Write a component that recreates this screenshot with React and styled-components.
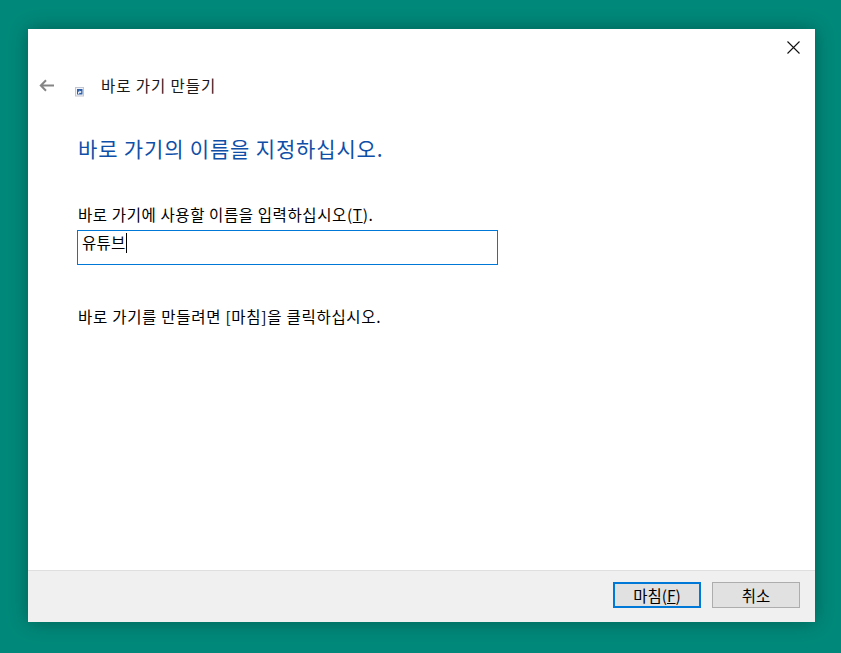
import React from "react";
import styled, { createGlobalStyle } from "styled-components";

const Global = createGlobalStyle`
  html, body { margin: 0; padding: 0; height: 100%; }
  body { background: #00897a; overflow: hidden; }
  #root { height: 100%; }
`;

const Desktop = styled.div`
  width: 841px;
  height: 653px;
  box-sizing: border-box;
  padding: 29px 26px 31px 28px;
  background: #00897a;
  font-family: "Noto Sans CJK KR", "Liberation Sans", sans-serif;
`;

const Dialog = styled.div`
  width: 787px;
  height: 593px;
  background: #fff;
  display: flex;
  flex-direction: column;
  box-shadow: 0 0 18px rgba(0, 40, 35, 0.42);
`;

const TopBar = styled.div`
  height: 28px;
  display: flex;
  justify-content: flex-end;
`;

const CloseButton = styled.div`
  width: 44px;
  height: 37px;
  display: flex;
  align-items: center;
  justify-content: center;
`;

const Nav = styled.div`
  height: 22px;
  margin-top: 18px;
  padding-left: 11px;
  display: flex;
  align-items: center;
`;

const Title = styled.span`
  margin-left: 16px;
  font-size: 15.5px;
  line-height: 22px;
  color: #1a1a1a;
  letter-spacing: 0.93px;
  position: relative;
  top: -1px;
`;

const Body = styled.div`
  flex: 1;
  padding: 37px 0 0 50px;
  display: flex;
  flex-direction: column;
`;

const Heading = styled.h1`
  margin: 0;
  font-size: 21px;
  line-height: 28px;
  font-weight: 400;
  color: #0f4fa8;
  letter-spacing: 0.83px;
`;

const Label = styled.div`
  margin-top: 42px;
  font-size: 15.5px;
  line-height: 20px;
  color: #000;
  letter-spacing: 0.6px;
`;

const Hot = styled.span`
  text-decoration: underline;
  text-underline-offset: 1px;
`;

const NameField = styled.div`
  margin-top: 6px;
  margin-left: -1px;
  width: 421px;
  height: 35px;
  box-sizing: border-box;
  border: 1px solid #0078d7;
  padding: 0 0 0 4px;
  display: flex;
  align-items: flex-start;
  font-size: 15.5px;
  line-height: 22px;
  color: #000;
  letter-spacing: 0.3px;
`;

const Caret = styled.span`
  width: 1px;
  height: 20px;
  margin: 2px 0 0 0;
  background: #000;
`;

const Hint = styled.div`
  margin-top: 41px;
  font-size: 15.5px;
  line-height: 20px;
  color: #000;
  letter-spacing: 0.72px;
`;

const Footer = styled.div`
  height: 52px;
  box-sizing: border-box;
  background: #f0f0f0;
  border-top: 1px solid #dfdfdf;
  padding: 11px 15px 0 0;
  display: flex;
  justify-content: flex-end;
  gap: 11px;
`;

const Button = styled.div`
  width: 88px;
  height: 26px;
  box-sizing: border-box;
  background: #e1e1e1;
  border: ${(p) => (p.$primary ? "2px solid #0078d7" : "1px solid #adadad")};
  padding-bottom: 1px;
  display: flex;
  align-items: center;
  justify-content: center;
  font-size: 15.5px;
  color: #000;
`;

const BackIcon = () => (
  <svg width="15" height="15" viewBox="0 0 15 15" fill="none" stroke="#858585" strokeWidth="2">
    <path d="M15 6.5H2M7 1.2 1.8 6.5 7 11.8" />
  </svg>
);

const ShortcutIcon = () => (
  <svg width="10" height="10" viewBox="0 0 10 10" style={{ marginLeft: 21, marginTop: 11 }}>
    <rect x="0.5" y="0.5" width="8" height="8.5" fill="#f2f4f8" stroke="#c2c6d0" />
    <rect x="2" y="2" width="5.5" height="5.5" fill="#2f5fa8" />
    <path d="M3 7V4.8h1.4V3.4L6.8 5 4.4 6.4V5.6H3.8V7Z" fill="#fff" />
  </svg>
);

const CloseIcon = () => (
  <svg width="13" height="13" viewBox="0 0 13 13" stroke="#111" strokeWidth="1.1" fill="none">
    <path d="M.5.5l12 12M12.5.5l-12 12" />
  </svg>
);

export default function App() {
  return (
    <Desktop>
      <Global />
      <Dialog>
        <TopBar>
          <CloseButton>
            <CloseIcon />
          </CloseButton>
        </TopBar>
        <Nav>
          <BackIcon />
          <ShortcutIcon />
          <Title>바로 가기 만들기</Title>
        </Nav>
        <Body>
          <Heading>바로 가기의 이름을 지정하십시오.</Heading>
          <Label>
            바로 가기에 사용할 이름을 입력하십시오(<Hot>T</Hot>).
          </Label>
          <NameField>
            유튜브
            <Caret />
          </NameField>
          <Hint>바로 가기를 만들려면 [마침]을 클릭하십시오.</Hint>
        </Body>
        <Footer>
          <Button $primary>
            마침(<Hot>F</Hot>)
          </Button>
          <Button>취소</Button>
        </Footer>
      </Dialog>
    </Desktop>
  );
}
